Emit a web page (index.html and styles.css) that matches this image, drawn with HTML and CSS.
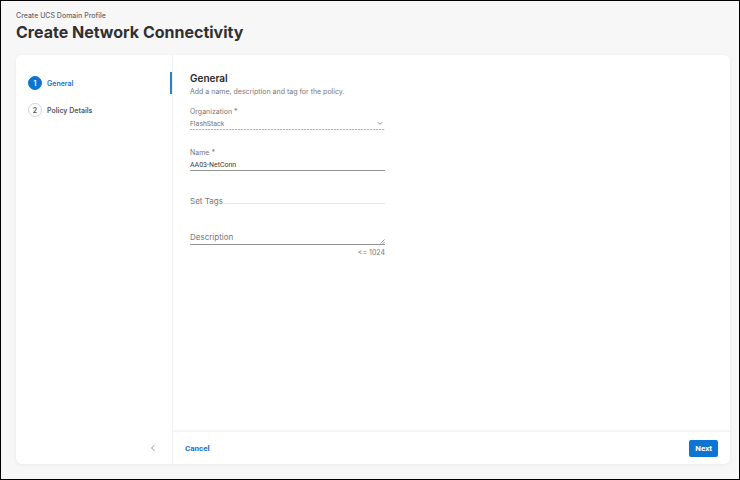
FILE: index.html
```html
<!DOCTYPE html>
<html lang="en">
<head>
<meta charset="utf-8">
<meta name="viewport" content="width=device-width, initial-scale=1">
<title>Create Network Connectivity</title>
<link rel="stylesheet" href="styles.css">
</head>
<body>
<div class="page">
  <header class="page-header">
    <p class="parent">Create UCS Domain Profile</p>
    <h1 class="title">Create Network Connectivity</h1>
  </header>
  <div class="card">
    <nav class="sidebar">
      <ol class="steps">
        <li class="step step-active"><span class="badge">1</span><span>General</span></li>
        <li class="step"><span class="badge">2</span><span>Policy Details</span></li>
      </ol>
      <button class="collapse" type="button" aria-label="Collapse">
        <svg width="6" height="8" viewBox="0 0 6 8"><path d="M4.5 1.2 1.5 4l3 2.8"/></svg>
      </button>
    </nav>
    <form class="main">
      <div class="content">
        <h2 class="heading">General</h2>
        <p class="intro">Add a name, description and tag for the policy.</p>
        <div class="fields">
          <div class="field">
            <label for="org">Organization *</label>
            <div class="select">
              <select id="org"><option>FlashStack</option></select>
              <svg width="6" height="5" viewBox="0 0 6 5"><path d="m.8 1.2 2.2 2.2 2.2-2.2"/></svg>
            </div>
          </div>
          <div class="field">
            <label for="name">Name *</label>
            <input id="name" class="name" type="text" value="AA03-NetConn">
          </div>
          <div class="tags">
            <label for="tags">Set Tags</label>
            <input id="tags" type="text">
          </div>
          <div class="description">
            <label for="description">Description</label>
            <textarea id="description" rows="1" maxlength="1024"></textarea>
            <svg class="grip" width="5" height="5" viewBox="0 0 5 5"><path d="M.5 4.5l4-4M2.8 4.7l2-2"/></svg>
            <span class="limit">&lt;= 1024</span>
          </div>
        </div>
      </div>
      <footer class="actions">
        <button class="cancel" type="button">Cancel</button>
        <button class="next" type="button">Next</button>
      </footer>
    </form>
  </div>
</div>
</body>
</html>
```
FILE: styles.css
```css
* {
  box-sizing: border-box;
}

body {
  margin: 0;
  font: 7px/12px Inter, sans-serif;
  color: #58585b;
}

h1, h2, p, ol {
  margin: 0;
  padding: 0;
}

button, input, select, textarea {
  margin: 0;
  padding: 0;
  border: 0;
  border-radius: 0;
  background: none;
  font: inherit;
  color: inherit;
  outline: 0;
}

svg {
  fill: none;
  stroke: #929295;
  stroke-width: 1;
}

.page {
  display: flex;
  flex-direction: column;
  min-height: 100vh;
  padding: 9px 9px 15px 15px;
  border: 1px solid #000;
  background: #f7f7f7;
}

.parent {
  font-weight: 500;
  color: #6a6a6d;
}

.title {
  font-size: 16px;
  line-height: 20px;
  font-weight: 700;
  color: #303032;
}

.card {
  display: flex;
  flex: 1;
  margin-top: 13px;
  border-radius: 6px;
  background: #fff;
  box-shadow: 0 1px 4px #0000000f;
}

.sidebar {
  display: flex;
  flex-direction: column;
  justify-content: space-between;
  flex: 0 0 157px;
  padding: 17px 0 10px;
  border-right: 1px solid #f0f0f0;
}

.steps {
  display: grid;
  gap: 5px;
  list-style: none;
}

.step {
  display: flex;
  align-items: center;
  gap: 5px;
  height: 22px;
  padding-left: 12px;
  border-right: 2px solid transparent;
  font-weight: 600;
  line-height: 13px;
}

.step-active {
  border-color: #2a7fc9;
  color: #1473cc;
}

.badge {
  width: 14px;
  height: 14px;
  border: 1px solid #d4d4d6;
  border-radius: 50%;
  text-align: center;
}

.step-active .badge {
  border-color: #0d74d1;
  background: #0d74d1;
  color: #fff;
}

.collapse {
  display: flex;
  align-self: flex-end;
  margin-right: 16px;
  padding: 2px 0;
}

.main {
  display: flex;
  flex: 1;
  flex-direction: column;
}

.content {
  flex: 1;
  padding: 15px 17px;
}

.heading {
  font-size: 10px;
  line-height: 16px;
  font-weight: 600;
  color: #28282a;
}

.intro {
  color: #77777a;
}

.fields {
  display: grid;
  width: 195px;
  margin-top: 8px;
}

.field {
  display: grid;
  margin-bottom: 17px;
  color: #77777a;
}

.select {
  display: grid;
  position: relative;
}

.select select {
  appearance: none;
  height: 12px;
  background: repeating-linear-gradient(90deg, #b4b4b6 0 2px, #e8e8e9 2px 3px) bottom / 100% 1px no-repeat;
  font-family: Roboto, sans-serif;
}

.select svg {
  position: absolute;
  top: 3px;
  right: 2px;
}

.name {
  height: 12px;
  border-bottom: 1px solid #949496;
  font-family: Roboto, sans-serif;
  color: #3c3c3f;
}

.tags {
  display: flex;
  margin-top: 7px;
  font-size: 8px;
  color: #77777a;
}

.tags input {
  flex: 1;
  min-width: 0;
  height: 9px;
  border-bottom: 1px solid #e6e6e8;
}

.description {
  display: grid;
  position: relative;
  margin-top: 24px;
  color: #77777a;
}

.description label {
  position: absolute;
  font-size: 8px;
}

.description textarea {
  height: 14px;
  border-bottom: 1px solid #949496;
  resize: none;
}

.grip {
  position: absolute;
  top: 8px;
  right: 0;
}

.limit {
  margin-top: 2px;
  text-align: right;
}

.actions {
  display: flex;
  align-items: center;
  justify-content: space-between;
  height: 34px;
  padding: 0 12px;
  border-top: 2px solid #f4f4f4;
  font-family: Roboto, sans-serif;
  font-size: 8px;
  line-height: 13px;
  font-weight: 700;
}

.cancel {
  color: #1473cc;
}

.next {
  height: 17px;
  padding: 1px 6px 0;
  border-radius: 2px;
  background: #0d74d1;
  color: #fff;
}
```
